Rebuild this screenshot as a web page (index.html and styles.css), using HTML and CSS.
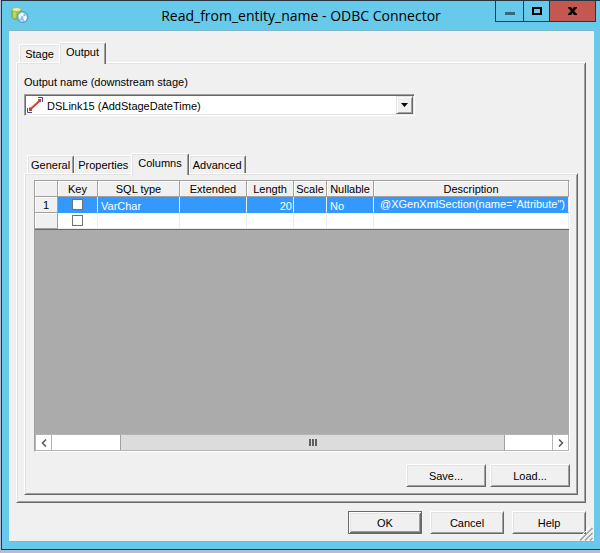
FILE: index.html
```html
<!DOCTYPE html>
<html lang="en">
<head>
<meta charset="utf-8">
<title>Read_from_entity_name - ODBC Connector</title>
<link rel="stylesheet" href="styles.css">
</head>
<body>
<main class="window">
  <header class="titlebar">
    <svg class="app-icon" width="18" height="18" viewBox="0 0 18 18" aria-hidden="true">
      <path d="M1 3.500v7.500c0 1.200 2 2.500 4.500 2.500s4.500-1.300 4.500-2.500V3.500z" fill="#a3c93f" stroke="#7da23a"/>
      <path d="M3.500 5.500v6" stroke="#c3de74" stroke-width="2"/>
      <ellipse cx="5.500" cy="3.500" rx="4.500" ry="2" fill="#e6f2b4" stroke="#9cbc52"/>
      <circle cx="11.500" cy="11" r="5.500" fill="#8fc3e8" stroke="#5a93bd"/>
      <path d="M7.500 9.500l3-3 2.500 1-1 2.500-2.500.5.500 2-1.500.5zM12 10.500l3-1 1 2-1.500 3.500-1.500-.5-.5-2zM9.500 14l2 .5-.5 1.500z" fill="#f4fafd"/>
    </svg>
    <h1 class="title">Read_from_entity_name - ODBC Connector</h1>
    <div class="window-controls">
      <button class="control minimize" aria-label="Minimize"><svg width="10" height="10" viewBox="0 0 10 10"><path d="M0 5h10v3H0z" fill="#37697c"/></svg></button>
      <button class="control maximize" aria-label="Maximize"><svg width="10" height="8" viewBox="0 0 10 8"><path d="M1 1h8v6H1z" fill="none" stroke="#000" stroke-width="2"/></svg></button>
      <button class="control close" aria-label="Close"><svg width="9" height="8" viewBox="0 0 9 8"><path d="M0 0h3l1.500 2L6 0h3v1L6 4l3 3v1H6L4.500 6 3 8H0V7l3-3-3-3z" fill="#000"/></svg></button>
    </div>
  </header>

  <div class="client">
    <div class="tabs" role="tablist">
      <button class="tab" role="tab">Stage</button>
      <button class="tab selected" role="tab" aria-selected="true">Output</button>
    </div>
    <section class="panel" role="tabpanel">
      <label class="field-label" for="output-name">Output name (downstream stage)</label>
      <div class="combo">
        <svg class="link-icon" width="18" height="16" viewBox="0 0 18 16" aria-hidden="true">
          <path d="M11 .5h4.500V5M.5 11v4.500H5" fill="none" stroke="#4444a4"/>
          <path d="M3 12.500L13 3.500" stroke="#b53a28" stroke-width="2"/>
          <path d="M4 10.500L12 3.500" stroke="#e48a72"/>
          <path d="M11 2h3v3h-2zM2 10.500h1.500L5 12.500v1.500H2z" fill="#b8442e"/>
        </svg>
        <select class="combo-select" id="output-name"><option>DSLink15 (AddStageDateTime)</option></select>
        <span class="combo-arrow"><svg width="7" height="4" viewBox="0 0 7 4"><path d="M0 0h7L3.500 4z" fill="#000"/></svg></span>
      </div>

      <div class="tabs inner-tabs" role="tablist">
        <button class="tab" role="tab">General</button>
        <button class="tab" role="tab">Properties</button>
        <button class="tab selected" role="tab" aria-selected="true">Columns</button>
        <button class="tab" role="tab">Advanced</button>
      </div>
      <section class="panel inner-panel" role="tabpanel">
        <div class="grid">
          <table class="columns">
            <colgroup>
              <col class="col-number"><col class="col-key"><col class="col-type"><col class="col-extended">
              <col class="col-length"><col class="col-scale"><col class="col-nullable"><col>
            </colgroup>
            <thead>
              <tr><th></th><th>Key</th><th>SQL type</th><th>Extended</th><th>Length</th><th>Scale</th><th>Nullable</th><th>Description</th></tr>
            </thead>
            <tbody>
              <tr class="active">
                <th scope="row">1</th>
                <td class="key"><input type="checkbox" aria-label="Key, row 1"></td>
                <td>VarChar</td><td></td><td class="number">20</td><td></td><td>No</td>
                <td class="description">@XGenXmlSection(name="Attribute")</td>
              </tr>
              <tr>
                <th scope="row"></th>
                <td class="key"><input type="checkbox" aria-label="Key, new row"></td>
                <td></td><td></td><td></td><td></td><td></td><td></td>
              </tr>
            </tbody>
          </table>
          <div class="scrollbar">
            <button class="scroll-button" aria-label="Scroll left"><svg width="6" height="8" viewBox="0 0 6 8"><path d="M5 .5L1.500 4 5 7.500" fill="none" stroke="#555" stroke-width="1.500"/></svg></button>
            <div class="track"><div class="thumb"><i></i><i></i><i></i></div></div>
            <button class="scroll-button" aria-label="Scroll right"><svg width="6" height="8" viewBox="0 0 6 8"><path d="M1 .5L4.500 4 1 7.500" fill="none" stroke="#555" stroke-width="1.500"/></svg></button>
          </div>
        </div>
        <div class="actions grid-actions">
          <button class="button wide">Save...</button>
          <button class="button wide">Load...</button>
        </div>
      </section>
    </section>
    <footer class="actions dialog-actions">
      <button class="button default">OK</button>
      <button class="button">Cancel</button>
      <button class="button">Help</button>
    </footer>
    <svg class="grip" width="14" height="14" viewBox="0 0 14 14" aria-hidden="true">
      <path d="M0 13L13 0M5 13l8-8M10 13l3-3" stroke="#fff" transform="translate(-1 -1)"/>
      <path d="M1 13.500L13.500 1M6 13.500L13.500 6M11 13.500l2.500-2.500" stroke="#a0a0a0" stroke-width="1.500"/>
    </svg>
  </div>
</main>
</body>
</html>
```
FILE: styles.css
```css
:root {
  --face: #f0f0f0;
  --light: #e3e3e3;
  --shadow: #a0a0a0;
  --dark: #696969;
  --sky: #67caea;
  --frame: #26343d;
}

* {
  box-sizing: border-box;
}

body {
  margin: 0;
  min-height: 100vh;
  padding: 0 0 3px 1px;
  display: flex;
  background: #b3bdd3;
  color: #000;
  font: 11px/14px "Liberation Sans", Arial, sans-serif;
}

button,
select {
  font: inherit;
  color: inherit;
  margin: 0;
}

svg {
  display: block;
}

.window {
  flex: 1;
  min-width: 0;
  display: flex;
  flex-direction: column;
  background: var(--sky);
  border: 1px solid var(--frame);
  border-right: 0;
}

.titlebar {
  position: relative;
  height: 29px;
  display: flex;
  align-items: center;
  justify-content: center;
}

.app-icon {
  position: absolute;
  left: 9px;
  top: 5px;
}

.title {
  margin: 0;
  font: 14px/20px "Open Sans", "Noto Sans", sans-serif;
}

.window-controls {
  position: absolute;
  top: 0;
  right: 4px;
  display: flex;
  height: 21px;
  border: solid var(--frame);
  border-width: 0 1px 1px;
}

.control {
  width: 28px;
  padding: 0;
  border: 0;
  border-right: 1px solid var(--frame);
  background: none;
  display: flex;
  align-items: center;
  justify-content: center;
}

.maximize {
  width: 26px;
}

.close {
  width: 45px;
  border: 0;
  background: #c4574f;
}

.minimize svg {
  margin-top: 2px;
}

.client {
  position: relative;
  flex: 1;
  margin: 0 6px 7px 7px;
  padding: 11px 8px 7px 7px;
  display: flex;
  flex-direction: column;
  background: var(--face);
  border: solid #82b5c8;
  border-width: 1px 0;
}

.tabs {
  display: flex;
  align-items: flex-end;
  height: 20px;
  padding-left: 3px;
}

.tab {
  min-width: 40px;
  height: 18px;
  padding: 1px 3px 0;
  background: var(--face);
  border: 1px solid #fff;
  border-right-color: var(--dark);
  border-bottom: 0;
  border-radius: 2px 2px 0 0;
  box-shadow: inset 1px 1px var(--light), inset -1px 0 var(--shadow);
}

.tab:has(+ .selected) {
  border-right: 0;
  box-shadow: inset 1px 1px var(--light);
}

.selected {
  position: relative;
  height: 22px;
  margin-bottom: -2px;
  padding: 0 6px 3px;
}

.panel {
  flex: 1;
  display: flex;
  flex-direction: column;
  padding: 12px 7px 7px;
  border: 1px solid;
  border-color: #fff var(--dark) var(--dark) #fff;
  box-shadow: inset 1px 1px var(--light), inset -1px -1px var(--shadow);
}

.field-label {
  align-self: flex-start;
}

.combo {
  width: 70.500%;
  height: 22px;
  margin: 5px 0 37px;
  display: flex;
  align-items: center;
  background: #fff;
  border: 1px solid;
  border-color: var(--shadow) #fff #fff var(--shadow);
  box-shadow: inset 1px 1px var(--dark), inset -1px -1px var(--light);
}

.link-icon {
  margin-left: 2px;
}

.combo-select {
  flex: 1;
  margin-right: -18px;
  height: 18px;
  padding: 1px 20px 0 2px;
  border: 0;
  outline: 0;
  appearance: none;
  background: none;
}

.combo-arrow {
  width: 17px;
  height: 18px;
  margin-right: 1px;
  display: flex;
  align-items: center;
  justify-content: center;
  pointer-events: none;
  background: var(--face);
  border: 1px solid;
  border-color: var(--light) var(--dark) var(--dark) var(--light);
  box-shadow: inset 1px 1px #fff, inset -1px -1px var(--shadow);
}

.inner-panel {
  padding: 6px 7px 7px;
}

.grid {
  flex: 1;
  margin: 0 0 0 2px;
  display: flex;
  flex-direction: column;
  background: #ababab;
  border: 1px solid;
  border-color: var(--shadow) #fff #fff var(--shadow);
}

.columns {
  width: 100%;
  table-layout: fixed;
  border-collapse: separate;
  border-spacing: 0;
  border-bottom: 1px solid var(--dark);
}

.col-number { width: 23px; }
.col-key { width: 40px; }
.col-type { width: 82px; }
.col-extended { width: 67px; }
.col-length { width: 47px; }
.col-scale { width: 33px; }
.col-nullable { width: 47px; }

.columns th,
.columns td {
  height: 16px;
  padding: 0;
  line-height: 14px;
  white-space: nowrap;
}

.columns th {
  font-weight: normal;
  text-align: center;
  background: var(--face);
  border: solid var(--shadow);
  border-width: 0 1px 1px 0;
  box-shadow: inset 1px 1px #fff;
}

.columns td {
  padding: 2px 3px 0;
  line-height: 12px;
  background: #fff;
  border: solid #ececec;
  border-width: 0 1px 1px 0;
}

.columns .active td {
  background: #3399ff;
  color: #fff;
  border-bottom-color: #3399ff;
}

.columns .key {
  padding: 0;
  text-align: center;
}

.columns .number {
  padding-right: 1px;
  text-align: right;
}

.columns .description {
  padding: 0 6px 2px;
}

.key input {
  appearance: none;
  display: block;
  width: 11px;
  height: 11px;
  margin: 0 auto;
  background: #fff;
  border: 1px solid #707070;
}

.scrollbar {
  height: 17px;
  margin-top: auto;
  display: flex;
  background: #fff;
  border: 1px solid #b4b4b4;
}

.scroll-button {
  width: 15px;
  padding: 0;
  display: flex;
  align-items: center;
  justify-content: center;
  background: #fff;
  border: 0;
}

.track {
  flex: 1;
  display: flex;
  border: solid #b4b4b4;
  border-width: 0 1px;
}

.thumb {
  width: 77%;
  margin-left: 13.600%;
  display: flex;
  align-items: center;
  justify-content: center;
  gap: 1px;
  background: #dcdcdc;
  border: solid var(--shadow);
  border-width: 0 1px;
}

.thumb i {
  width: 2px;
  height: 7px;
  background: #606060;
}

.actions {
  display: flex;
  justify-content: flex-end;
}

.grid-actions {
  gap: 4px;
  margin-top: 12px;
}

.dialog-actions {
  gap: 8px;
  margin-top: 8px;
}

.button {
  width: 74px;
  height: 23px;
  padding: 0;
  background: var(--face);
  border: 1px solid;
  border-color: #fff var(--dark) var(--dark) #fff;
  box-shadow: inset 1px 1px var(--light), inset -1px -1px var(--shadow);
}

.wide {
  width: 80px;
}

.default {
  border-color: var(--dark);
  box-shadow: inset 1px 1px #fff, inset -1px -1px var(--dark), inset 2px 2px var(--light), inset -2px -2px var(--shadow);
}

.grip {
  position: absolute;
  right: 1px;
  bottom: 0;
}
```
